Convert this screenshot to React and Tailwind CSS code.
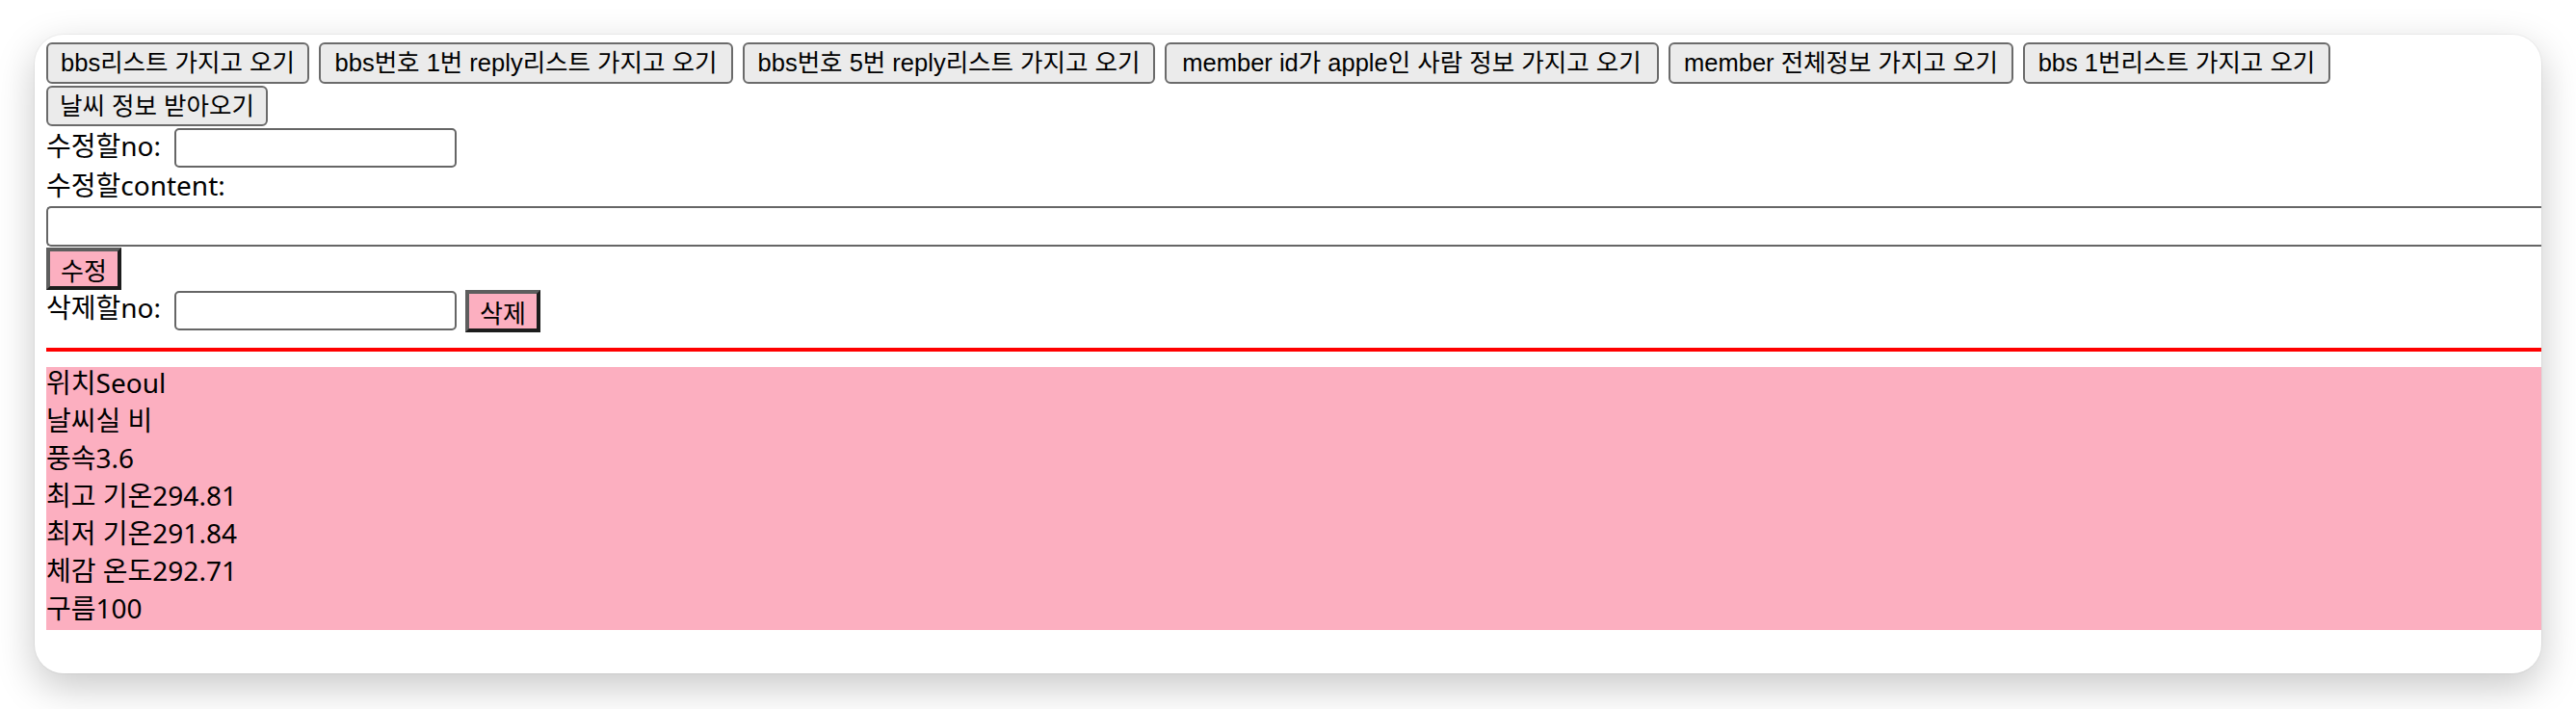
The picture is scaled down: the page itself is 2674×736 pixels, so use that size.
import React from "react";

const topButtons = [
  { label: "bbs리스트 가지고 오기", width: "w-[273px]" },
  { label: "bbs번호 1번 reply리스트 가지고 오기", width: "w-[430px]" },
  { label: "bbs번호 5번 reply리스트 가지고 오기", width: "w-[428px]" },
  { label: "member id가 apple인 사람 정보 가지고 오기", width: "w-[513px]" },
  { label: "member 전체정보 가지고 오기", width: "w-[358px]" },
  { label: "bbs 1번리스트 가지고 오기", width: "w-[319px]" },
];

const weather = [
  ["위치", "Seoul"],
  ["날씨", "실 비"],
  ["풍속", "3.6"],
  ["최고 기온", "294.81"],
  ["최저 기온", "291.84"],
  ["체감 온도", "292.71"],
  ["구름", "100"],
];

function GrayButton({ label, width, height = "h-[43px]" }) {
  return (
    <button
      className={`${width} ${height} shrink-0 flex items-center justify-center bg-[#ebebeb] border-2 border-[#6b6b6b] rounded-[6px] text-black text-[25.5px] font-['Liberation_Sans','Noto_Sans_CJK_KR',sans-serif] whitespace-nowrap`}
    >
      {label}
    </button>
  );
}

function PinkButton({ label }) {
  return (
    <button className="w-[78px] h-[44px] shrink-0 flex items-center justify-center bg-[#fcafc0] border-[4px] border-solid border-t-[#5e5e5e] border-l-[#5e5e5e] border-r-[#1c1c1c] border-b-[#1c1c1c] text-black text-[26px] font-['Noto_Sans_CJK_KR',sans-serif]">
      {label}
    </button>
  );
}

export default function App() {
  return (
    <div className="w-full h-[736px] bg-white pt-[36px] px-[36px] overflow-hidden">
      <div className="h-[663px] bg-white rounded-[30px] overflow-hidden shadow-[0_14px_40px_rgba(0,0,0,0.22),0_0_0_1px_rgba(0,0,0,0.04)]">
        <div className="pl-[12px] pt-[8px] text-black text-[28px] leading-[39px] font-['Noto_Sans','Noto_Sans_CJK_KR',sans-serif]">
          {/* buttons */}
          <div className="flex gap-[10px]">
            {topButtons.map((b) => (
              <GrayButton key={b.label} label={b.label} width={b.width} />
            ))}
          </div>
          <div className="flex mt-[2px]">
            <GrayButton label="날씨 정보 받아오기" width="w-[230px]" height="h-[42px]" />
          </div>

          {/* 수정 */}
          <div className="flex items-start h-[41px] mt-[2px]">
            <span className="mt-[-1px] whitespace-nowrap">수정할no:</span>
            <input type="text" className="ml-[14px] w-[293px] h-[41px] bg-white border-2 border-[#666666] rounded-[5px] outline-none" />
          </div>
          <div className="mt-[-1px] whitespace-nowrap">수정할content:</div>
          <input type="text" className="block w-full mt-[2px] h-[42px] bg-white border-2 border-r-0 border-[#666666] rounded-l-[5px] outline-none" />
          <div className="flex mt-[1px]">
            <PinkButton label="수정" />
          </div>

          {/* 삭제 */}
          <div className="flex items-start h-[44px]">
            <span className="mt-[-1px] whitespace-nowrap">삭제할no:</span>
            <input type="text" className="ml-[14px] mt-[1px] w-[293px] h-[41px] bg-white border-2 border-[#666666] rounded-[5px] outline-none" />
            <div className="ml-[9px]">
              <PinkButton label="삭제" />
            </div>
          </div>

          <div className="mt-[16px] h-[4px] bg-[#ff0000]" />

          {/* weather */}
          <div className="mt-[16px] h-[273px] bg-[#fcafc0] flex flex-col">
            <div className="mt-[-3px]">
              {weather.map(([k, v]) => (
                <div key={k} className="whitespace-nowrap">
                  {k}
                  {v}
                </div>
              ))}
            </div>
          </div>
        </div>
      </div>
    </div>
  );
}
